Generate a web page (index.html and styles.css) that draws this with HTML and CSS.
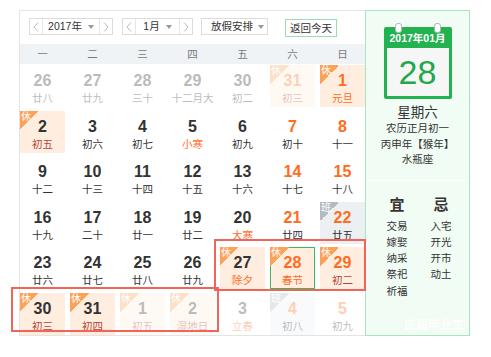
FILE: index.html
```html
<!DOCTYPE html>
<html lang="zh-CN">
<head>
  <meta charset="UTF-8">
  <title>万年历</title>
  <link rel="stylesheet" href="styles.css">
</head>
<body>
  <div class="cal">
    <div class="main">
      <div class="bar">
        <div class="sel year">
          <span class="arr"><svg width="6" height="10" viewBox="0 0 6 10"><polyline points="5,0.5 1,5 5,9.5" /></svg></span>
          <span class="val">2017年<i class="caret"></i></span>
          <span class="arr"><svg width="6" height="10" viewBox="0 0 6 10"><polyline points="1,0.5 5,5 1,9.5" /></svg></span>
        </div>
        <div class="sel month">
          <span class="arr"><svg width="6" height="10" viewBox="0 0 6 10"><polyline points="5,0.5 1,5 5,9.5" /></svg></span>
          <span class="val">1月<i class="caret"></i></span>
          <span class="arr"><svg width="6" height="10" viewBox="0 0 6 10"><polyline points="1,0.5 5,5 1,9.5" /></svg></span>
        </div>
        <div class="sel plan"><span class="val">放假安排<i class="caret"></i></span></div>
        <button class="today-btn">返回今天</button>
      </div>

      <div class="week">
        <span>一</span><span>二</span><span>三</span><span>四</span><span>五</span><span>六</span><span>日</span>
      </div>

      <div class="grid">
        <div class="day other"><b>26</b><span>廿八</span></div>
        <div class="day other"><b>27</b><span>廿九</span></div>
        <div class="day other"><b>28</b><span>三十</span></div>
        <div class="day other"><b>29</b><span>十二月大</span></div>
        <div class="day other"><b>30</b><span>初二</span></div>
        <div class="day other rest we"><i class="tag">休</i><b>31</b><span>初三</span></div>
        <div class="day rest we fest"><i class="tag">休</i><b>1</b><span>元旦</span></div>

        <div class="day rest"><i class="tag">休</i><b>2</b><span>初五</span></div>
        <div class="day"><b>3</b><span>初六</span></div>
        <div class="day"><b>4</b><span>初七</span></div>
        <div class="day fest"><b>5</b><span>小寒</span></div>
        <div class="day"><b>6</b><span>初九</span></div>
        <div class="day we"><b>7</b><span>初十</span></div>
        <div class="day we"><b>8</b><span>十一</span></div>

        <div class="day"><b>9</b><span>十二</span></div>
        <div class="day"><b>10</b><span>十三</span></div>
        <div class="day"><b>11</b><span>十四</span></div>
        <div class="day"><b>12</b><span>十五</span></div>
        <div class="day"><b>13</b><span>十六</span></div>
        <div class="day we"><b>14</b><span>十七</span></div>
        <div class="day we"><b>15</b><span>十八</span></div>

        <div class="day"><b>16</b><span>十九</span></div>
        <div class="day"><b>17</b><span>二十</span></div>
        <div class="day"><b>18</b><span>廿一</span></div>
        <div class="day"><b>19</b><span>廿二</span></div>
        <div class="day fest"><b>20</b><span>大寒</span></div>
        <div class="day we"><b>21</b><span>廿四</span></div>
        <div class="day work we"><i class="tag">班</i><b>22</b><span>廿五</span></div>

        <div class="day"><b>23</b><span>廿六</span></div>
        <div class="day"><b>24</b><span>廿七</span></div>
        <div class="day"><b>25</b><span>廿八</span></div>
        <div class="day"><b>26</b><span>廿九</span></div>
        <div class="day rest fest"><i class="tag">休</i><b>27</b><span>除夕</span></div>
        <div class="day rest we fest today"><i class="tag">休</i><b>28</b><span>春节</span></div>
        <div class="day rest we"><i class="tag">休</i><b>29</b><span>初二</span></div>

        <div class="day rest"><i class="tag">休</i><b>30</b><span>初三</span></div>
        <div class="day rest"><i class="tag">休</i><b>31</b><span>初四</span></div>
        <div class="day other rest"><i class="tag">休</i><b>1</b><span>初五</span></div>
        <div class="day other rest"><i class="tag">休</i><b>2</b><span>湿地日</span></div>
        <div class="day other fest"><b>3</b><span>立春</span></div>
        <div class="day other work we"><i class="tag">班</i><b>4</b><span>初八</span></div>
        <div class="day other we"><b>5</b><span>初九</span></div>
      </div>
    </div>

    <div class="side">
      <div class="pad">
        <div class="pad-head">2017年01月</div>
        <div class="pad-body">28</div>
      </div>
      <div class="info">
        <div class="wk">星期六</div>
        <div>农历正月初一</div>
        <div>丙申年【猴年】</div>
        <div>水瓶座</div>
      </div>
      <div class="yiji">
        <div class="yj-head">宜</div>
        <div class="yj-head">忌</div>
        <div>交易</div><div>入宅</div>
        <div>嫁娶</div><div>开光</div>
        <div>纳采</div><div>开市</div>
        <div>祭祀</div><div>动土</div>
        <div>祈福</div><div></div>
      </div>
      <div class="watermark">应届毕业生</div>
    </div>
  </div>

  <div class="mark mark-a"></div>
  <div class="mark mark-b"></div>
</body>
</html>
```

FILE: styles.css
```css
* { margin:0; padding:0; box-sizing:border-box }
body {
  background:#fff; color:#333;
  font-family:"Liberation Sans","Noto Sans CJK SC",sans-serif;
  font-size:10.5px;
}

.cal { display:flex; margin:10px 0 0 19px; }

/* left: month grid */
.main {
  width:346px; height:326px;
  border:1px solid #e4e4e4; border-right:none;
}
.bar { display:flex; align-items:flex-start; height:33px; padding:7px 0 0 9px; }
.sel {
  display:flex; height:17px; border:1px solid #dcdcdc; background:#fff;
  line-height:15px;
}
.sel .arr { width:13px; display:flex; align-items:center; justify-content:center; }
.sel .arr:first-child { border-right:1px solid #e6e6e6; }
.sel .arr:last-child { border-left:1px solid #e6e6e6; }
.sel .arr polyline { fill:none; stroke:#bbb; stroke-width:1; }
.sel .val { flex:1; display:flex; align-items:center; justify-content:center; gap:6px; }
.caret { width:0; height:0; border-left:3px solid transparent; border-right:3px solid transparent; border-top:4px solid #999; }
.year { width:84px; }
.month { width:71px; margin-left:9px; }
.plan { width:67px; margin-left:8px; }
.plan .val { justify-content:flex-start; padding-left:9px; gap:5px; }
.today-btn {
  margin:1px 0 0 17px; height:18px; padding:0 4px;
  border:1px solid #9ddcae; background:#fff; color:#333;
  font:inherit; line-height:16px;
}

.week {
  display:grid; grid-template-columns:repeat(7,45px); column-gap:5px;
  height:20px; line-height:20px; margin-bottom:1px;
  background:#eff3f5; color:#7a7a7a; text-align:center; font-size:10.5px;
}

.grid {
  display:grid; grid-template-columns:repeat(7,45px); column-gap:5px;
  grid-auto-rows:42px; row-gap:3.6px;
}
.day { position:relative; text-align:center; padding-top:7px; }
.day b { display:block; font-size:16px; line-height:18px; color:#333; }
.day span { display:block; line-height:14px; margin-top:1px; color:#333; }
.day.we b { color:#ff6c1e; }
.day.rest { background:#ffeedf; }
.day.rest span { color:#b5453a; }
.day.fest span { color:#ff6c1e; }
.day.work { background:#edf0f3; }
.day.other { opacity:.33; }
.day.today { border:1px solid #3cb95a; padding-top:6px; }
.day.today .tag { left:-1px; top:-1px; }
.tag {
  position:absolute; left:0; top:0; width:19px; height:19px;
  background:linear-gradient(135deg,#fba25a 50%,transparent 50%);
  color:#fff; font-style:normal; font-size:10px; line-height:11px;
  text-align:left; padding-left:1px;
}
.work .tag { background:linear-gradient(135deg,#b3bbc3 50%,transparent 50%); }

/* right: selected day */
.side {
  position:relative;
  width:105px; height:326px;
  border:1px solid #a8e5bd; background:#f0fcf4;
  text-align:center;
}
.pad {
  position:relative; width:68px; height:72px; margin:16px auto 0;
  background:#22b24f; border-radius:2px; padding:0 3px 3px;
}
.pad::before, .pad::after {
  content:""; position:absolute; top:-4.5px; width:5px; height:8px;
  background:#fff; border:1px solid #b5b5b5; border-radius:3px;
}
.pad::before { left:11px; }
.pad::after { right:11px; }
.pad-head { height:20.5px; line-height:22px; color:#fff; font-weight:bold; font-size:10.5px; }
.pad-body { height:48.5px; background:#f6f6f6; color:#22a84a; font-size:34px; line-height:49px; }
.info { margin-top:6px; line-height:15.5px; }
.info .wk { font-size:13.5px; line-height:16px; }
.yiji {
  display:grid; grid-template-columns:40px 40px; column-gap:4px;
  justify-content:center; padding:14px 0 0 3px; margin-top:12px;
  border-top:1px solid #fafffb; line-height:16.3px;
}
.yj-head { font-size:15px; font-weight:bold; line-height:20px; margin-bottom:3px; color:#3a3430; }
.watermark {
  position:absolute; left:38px; bottom:3px;
  font-size:12px; font-weight:bold; color:rgba(255,255,255,.95); white-space:nowrap;
}

/* annotation boxes */
.mark { position:absolute; border:2px solid #f1645a; }
.mark-a { left:214px; top:239px; width:152px; height:52px; }
.mark-b { left:11px; top:287px; width:208px; height:45px; }
```
